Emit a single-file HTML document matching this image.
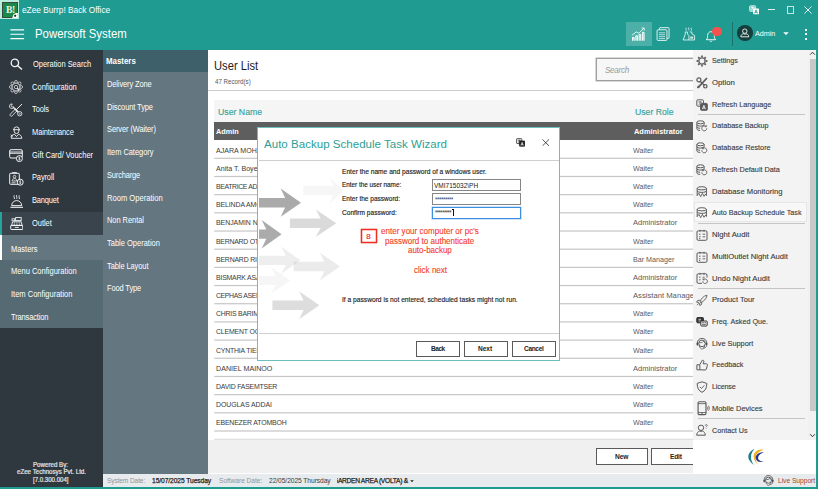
<!DOCTYPE html>
<html><head><meta charset="utf-8"><title>eZee Burrp! Back Office</title>
<style>
*{box-sizing:border-box;margin:0;padding:0}
html,body{width:818px;height:489px;overflow:hidden;background:#1f9b92;font-family:"Liberation Sans",sans-serif}
#app{position:relative;width:818px;height:489px;background:#1f9b92;overflow:hidden}
.a{position:absolute}
.t{position:absolute;white-space:pre;line-height:1;transform-origin:0 0}
.ico{position:absolute;left:696px;width:12px;height:12px}
</style></head>
<body>
<div id="app">
<div class="a" style="left:0;top:0;width:18.900px;height:18.900px;background:#b7eedb"></div>
<div class="a" style="left:1.500px;top:1.700px;width:16.400px;height:16.200px;background:#1b8a49;border:1.200px solid #3a4a40"></div>
<div class="t" style="left:5.70px;top:3.60px;font-size:10.8px;color:#e9f5ee;letter-spacing:-0.621px;transform:scaleX(0.9000);font-weight:bold;font-family:'Liberation Serif',serif;">B!</div>
<svg class="a" style="left:11.500px;top:13px" width="6.400" height="5.200" viewBox="0 0 13 10.500"><path d="M0 10.500L3 3 8 0h5v10.500z" fill="#fff"/><path d="M6.500 3.200l2.400 1.700-.9 2.800H5l-.9-2.800z" fill="#222"/><path d="M1 8l1.500 1M11 2.500l1.500 1M11.500 8.500l1-1" stroke="#222" stroke-width="1.200"/></svg>
<div class="t" style="left:21.50px;top:6.40px;font-size:8.9px;color:#fff;transform:scaleX(0.9329);">eZee Burrp! Back Office</div>
<svg class="a" style="left:9.5px;top:28px" width="15" height="13" viewBox="0 0 15 13"><path d="M0.400 1.800h13.700M0.400 6.200h13.700M0.400 10.600h13.700" stroke="#fff" stroke-width="1.15"/></svg>
<div class="t" style="left:35.40px;top:29.30px;font-size:11.9px;color:#fff;transform:scaleX(0.9569);">Powersoft System</div>
<svg class="a" style="left:748.500px;top:4.800px" width="10.500" height="9.800" viewBox="0 0 11 10"><rect x="0.600" y="0.600" width="6.400" height="6" rx=".9" fill="#8fd0ca" stroke="#d9efed" stroke-width=".8"/><path d="M2 2.600h3.400M3.700 1.600v1M2.300 5c1-.4 2-1.300 2.300-2.400" stroke="#fff" stroke-width=".75" fill="none"/><rect x="4.300" y="3.500" width="6.300" height="6.100" rx=".8" fill="#fff"/><path d="M5.900 8.700l1.500-3.700 1.500 3.700M6.400 7.600h2" stroke="#1f9b92" stroke-width=".85" fill="none"/></svg>
<div class="a" style="left:768px;top:8.8px;width:7.2px;height:1px;background:#e4f3f2;"></div>
<div class="a" style="left:786.500px;top:6.200px;width:7.400px;height:7.400px;border:1px solid #c4e6e3"></div>
<svg class="a" style="left:804.300px;top:6px" width="8" height="8" viewBox="0 0 8 8"><path d="M0.400 0.400l7.200 7.200M7.600 0.400l-7.200 7.200" stroke="#eef8f7" stroke-width=".95"/></svg>
<div class="a" style="left:626px;top:21.8px;width:25.6px;height:24.7px;background:#4cb0a8;"></div>
<svg class="a" style="left:631px;top:27px" width="15" height="15" viewBox="0 0 15 15" fill="none" stroke="#fff" stroke-width="1" stroke-opacity=".92"><path d="M1.500 13.700v-3.300h1.700v3.300M4.800 13.700v-5h1.700v5M8.100 13.700v-6.300h1.700v6.300M11.400 13.700v-8.300h1.700v8.300" fill="#fff" fill-opacity=".45"/><path d="M0.800 8.300l4.700-3.400 2.300 1.400 5.300-5.300M10.600 1h2.600v2.600" stroke-width=".9"/></svg>
<svg class="a" style="left:656.300px;top:27px" width="14.500" height="14.500" viewBox="0 0 15 15" fill="none" stroke="#fff" stroke-width="1" stroke-opacity=".88"><path d="M3.600 2.800V1.300c0-.4.300-.6.600-.6h8.600c.4 0 .7.200.7.600v9.800c0 .4-.3.600-.7.600h-1.400"/><rect x="1.100" y="2.900" width="10.200" height="11" rx="1"/><path d="M3 6h6.400M3 8h6.400M3 10h6.400M3 12h6.400" stroke-width=".8"/></svg>
<svg class="a" style="left:682px;top:27.300px" width="14" height="14" viewBox="0 0 15 15" fill="none" stroke="#fff" stroke-width=".95" stroke-opacity=".88"><path d="M4.400 0.800c-.9 1.100.9 1.800 0 3M7.200 0.600c-.9 1.100.9 1.800 0 3M10 0.800c-.9 1.100.9 1.800 0 3"/><path d="M3.600 5.300h2.200l.3 2.500 1.300 1.400v4.700H1.200l2.200-5.900z"/><path d="M8.300 5.300h2.200l.2 2.200 2.800 1.500v4.900H7.400"/><rect x="8.800" y="10.200" width="3.200" height="2.400" fill="#fff" fill-opacity=".75" stroke="none"/></svg>
<svg class="a" style="left:705.300px;top:29.500px" width="13" height="12.500" viewBox="0 0 14 13" fill="none" stroke="#fff" stroke-width="1" stroke-opacity=".92"><path d="M1.200 10.200c1.600-1 1.600-2.600 1.600-4.600 0-2.200 1.400-4 3.600-4s3.600 1.800 3.600 4c0 2 0 3.600 1.600 4.600z"/><path d="M5 11.300c.3 1 2.500 1 2.800 0"/></svg>
<div class="a" style="left:712px;top:26.600px;width:9.800px;height:9.800px;border-radius:50%;background:#f5524f"></div>
<div class="a" style="left:732px;top:21.8px;width:1px;height:24.5px;background:#18736c;"></div>
<div class="a" style="left:737.100px;top:25.400px;width:15.600px;height:15.600px;border-radius:50%;background:#153f3b"></div>
<svg class="a" style="left:740.100px;top:28.200px" width="9.600" height="9.600" viewBox="0 0 10 10" fill="none" stroke="#fff" stroke-width=".9"><circle cx="5" cy="3.300" r="2.300"/><path d="M0.800 9.200c.2-2.200 1.600-3 2.800-3.200.8.600 2 .6 2.800 0 1.200.2 2.600 1 2.800 3.200z"/></svg>
<div class="t" style="left:755.00px;top:29.60px;font-size:7.3px;color:#fff;transform:scaleX(0.9813);">Admin</div>
<svg class="a" style="left:782.900px;top:31.600px" width="6" height="3.300" viewBox="0 0 7 4"><path d="M0.200 0.200h6.600L3.500 3.800z" fill="#fff"/></svg>
<div class="a" style="left:805px;top:28.8px;width:2.1px;height:2.1px;background:#fff;"></div>
<div class="a" style="left:805px;top:33.1px;width:2.1px;height:2.1px;background:#fff;"></div>
<div class="a" style="left:805px;top:37.6px;width:2.1px;height:2.1px;background:#fff;"></div>
<div class="a" style="left:0px;top:49.6px;width:103px;height:438.4px;background:#2f373f;"></div>
<div class="a" style="left:0px;top:211.7px;width:103px;height:23px;background:#3a444c;"></div>
<div class="a" style="left:0px;top:211.7px;width:2.2px;height:23px;background:#26a69a;"></div>
<div class="a" style="left:0px;top:234.7px;width:103px;height:25.3px;background:#64767f;"></div>
<div class="a" style="left:0px;top:234.7px;width:2.2px;height:25.3px;background:#fff;"></div>
<div class="a" style="left:0px;top:260px;width:103px;height:68px;background:#566a74;"></div>
<svg class="a" style="left:9.5px;top:58px" width="13" height="13" viewBox="0 0 13 13" fill="none" stroke="#fff" stroke-width="1" stroke-opacity=".95" ><circle cx="4.900" cy="4.900" r="3.700" stroke-width="1.300"/><path d="M7.700 7.700l4.300 3.800" stroke-width="1.500"/></svg>
<svg class="a" style="left:9px;top:80.2px" width="14" height="14" viewBox="0 0 14 14" fill="none" stroke="#fff" stroke-width="1" stroke-opacity=".95" ><g stroke-width=".75" stroke-opacity=".85"><circle cx="12.10" cy="7.00" r="1.45"/><circle cx="10.61" cy="10.61" r="1.45"/><circle cx="7.00" cy="12.10" r="1.45"/><circle cx="3.39" cy="10.61" r="1.45"/><circle cx="1.90" cy="7.00" r="1.45"/><circle cx="3.39" cy="3.39" r="1.45"/><circle cx="7.00" cy="1.90" r="1.45"/><circle cx="10.61" cy="3.39" r="1.45"/><circle cx="7" cy="7" r="3.900" fill="#2f373f"/><circle cx="7" cy="7" r="1.700"/><path d="M8.200 8.200l2.300 2.300" stroke-width="1.300"/></g></svg>
<svg class="a" style="left:9px;top:102.8px" width="14" height="14" viewBox="0 0 14 14" fill="none" stroke="#fff" stroke-width="1" stroke-opacity=".95" ><g stroke-opacity=".9"><path d="M13 1L7.300 6.700" stroke-width="1"/><path d="M6.400 6l1.700 1.700-5 5.100c-.5.500-1.200.5-1.700 0s-.5-1.200 0-1.700z" stroke-width=".85"/><path d="M4.900 3.900a2.300 2.300 0 1 1-1.600-2.900l-1.100 1.500.4 1.200 1.300.2z" stroke-width=".85"/><path d="M4.800 4.700l4.400 4.400" stroke-width="1.600"/><circle cx="10.700" cy="10.700" r="2.200" stroke-width=".85"/><circle cx="10.700" cy="10.700" r=".7" stroke-width=".6"/></g></svg>
<svg class="a" style="left:9.5px;top:126px" width="13" height="13" viewBox="0 0 13 13" fill="none" stroke="#fff" stroke-width="1" stroke-opacity=".95" ><path d="M3.800 3.600a2.700 2.700 0 0 1 5.400 0M3 3.700h7M4.200 3.900v1.300a2.300 2.300 0 0 0 4.600 0v-1.300" stroke-width=".9"/><path d="M1.200 12.300c.1-2.400 1.500-3.600 3.300-4l2 2.300 2-2.300c1.800.4 3.200 1.600 3.300 4z" stroke-width=".9"/><path d="M0.700 8.600l2 2M0.800 10.600l1.800-2" stroke-width=".8"/></svg>
<svg class="a" style="left:8.5px;top:148.8px" width="15" height="13.5" viewBox="0 0 15 13.500" fill="none" stroke="#fff" stroke-width="1" stroke-opacity=".95" ><rect x="0.700" y="0.700" width="12.600" height="8.300" rx="1.300"/><path d="M0.700 3h12.600M0.700 4.300h12.600" stroke-width=".9"/><circle cx="10.400" cy="9.600" r="3" fill="#2f373f"/><path d="M11.200 8.600c-.6-.6-1.700-.3-1.600.4.100.8 1.700.4 1.700 1.300 0 .7-1.200.9-1.800.2M10.400 7.700v3.800" stroke-width=".6"/></svg>
<svg class="a" style="left:8.5px;top:171.5px" width="15" height="14" viewBox="0 0 15 14" fill="none" stroke="#fff" stroke-width="1" stroke-opacity=".95" ><rect x="0.700" y="1.300" width="9.600" height="11" rx=".8"/><path d="M3.600 1.300v-.8h3.800v.8" stroke-width=".8"/><circle cx="5.500" cy="4.600" r="1.300" stroke-width=".8"/><path d="M3.200 9c0-1.600 1-2.400 2.300-2.400s2.300.8 2.300 2.400z" stroke-width=".8"/><path d="M2.500 10.800h4" stroke-width=".8"/><circle cx="11.200" cy="10.200" r="3" fill="#2f373f"/><path d="M12 9.200c-.6-.6-1.700-.3-1.600.4.100.8 1.700.4 1.700 1.300 0 .7-1.200.9-1.800.2M11.200 8.300v3.800" stroke-width=".6"/></svg>
<svg class="a" style="left:9.5px;top:194.5px" width="13.5" height="13" viewBox="0 0 13.500 13" fill="none" stroke="#fff" stroke-width="1" stroke-opacity=".95" ><path d="M4.200 0.300c-1 1.300 1 2.200 0 3.800M6.700 0.100c-1 1.300 1 2.200 0 3.800M9.200 0.300c-1 1.300 1 2.200 0 3.800" stroke-width=".85"/><path d="M1.700 10.600a5 5 0 0 1 10 0z" stroke-width=".95"/><path d="M0.400 12.300h12.600" stroke-width="1.100"/></svg>
<svg class="a" style="left:9.5px;top:217.3px" width="13.5" height="13.2" viewBox="0 0 13.500 13.200" fill="none" stroke="#fff" stroke-width="1" stroke-opacity=".95" ><rect x="5.600" y="0.600" width="5.600" height="3" stroke-width=".9"/><rect x="2" y="1.800" width="2.600" height="2" stroke-width=".8"/><path d="M2.600 4.800h8.600l1 3.600H1.600z" stroke-width=".9"/><path d="M4 6h1M6.400 6h1M8.800 6h1M3.800 7.300h1M6.400 7.300h1M9 7.300h1" stroke-width=".7"/><rect x="0.700" y="8.400" width="12.100" height="4.100" rx=".6"/><path d="M4.800 10.400h4" stroke-width=".9"/></svg>
<div class="t" style="left:33.00px;top:60.00px;font-size:8.3px;color:#fff;letter-spacing:-0.023px;transform:scaleX(0.9000);">Operation Search</div>
<div class="t" style="left:32.20px;top:82.68px;font-size:8.3px;color:#fff;transform:scaleX(0.9076);">Configuration</div>
<div class="t" style="left:32.20px;top:105.36px;font-size:8.3px;color:#fff;letter-spacing:-0.097px;transform:scaleX(0.9000);">Tools</div>
<div class="t" style="left:32.20px;top:128.04px;font-size:8.3px;color:#fff;letter-spacing:-0.097px;transform:scaleX(0.9000);">Maintenance</div>
<div class="t" style="left:32.20px;top:150.72px;font-size:8.3px;color:#fff;letter-spacing:-0.027px;transform:scaleX(0.9000);">Gift Card/ Voucher</div>
<div class="t" style="left:32.20px;top:173.40px;font-size:8.3px;color:#fff;letter-spacing:-0.133px;transform:scaleX(0.9000);">Payroll</div>
<div class="t" style="left:32.20px;top:196.08px;font-size:8.3px;color:#fff;letter-spacing:-0.163px;transform:scaleX(0.9000);">Banquet</div>
<div class="t" style="left:32.20px;top:218.76px;font-size:8.3px;color:#fff;letter-spacing:-0.023px;transform:scaleX(0.9000);">Outlet</div>
<div class="t" style="left:10.50px;top:244.50px;font-size:8.3px;color:#fff;letter-spacing:-0.010px;transform:scaleX(0.9000);">Masters</div>
<div class="t" style="left:10.50px;top:267.30px;font-size:8.3px;color:#fff;transform:scaleX(0.9072);">Menu Configuration</div>
<div class="t" style="left:10.50px;top:290.00px;font-size:8.3px;color:#fff;transform:scaleX(0.9071);">Item Configuration</div>
<div class="t" style="left:10.50px;top:312.70px;font-size:8.3px;color:#fff;letter-spacing:-0.136px;transform:scaleX(0.9000);">Transaction</div>
<div class="t" style="left:33.30px;top:461.60px;font-size:6.3px;color:#e4e6e8;transform:scaleX(0.9803);-webkit-text-stroke:.2px #e4e6e8;">Powered By:</div>
<div class="t" style="left:16.70px;top:469.20px;font-size:6.3px;color:#e4e6e8;transform:scaleX(0.9774);-webkit-text-stroke:.2px #e4e6e8;">eZee Technosys Pvt. Ltd.</div>
<div class="t" style="left:33.30px;top:476.60px;font-size:6.3px;color:#e4e6e8;transform:scaleX(0.9656);-webkit-text-stroke:.2px #e4e6e8;">[7.0.300.004]</div>
<div class="a" style="left:103px;top:49.6px;width:105.3px;height:424px;background:#64767f;"></div>
<div class="a" style="left:103px;top:49.6px;width:105.3px;height:22.6px;background:#3d606b;"></div>
<div class="t" style="left:105.50px;top:57.30px;font-size:8.8px;color:#fff;letter-spacing:-0.022px;transform:scaleX(0.9000);font-weight:bold;">Masters</div>
<div class="t" style="left:107.00px;top:80.00px;font-size:8.3px;color:#fff;letter-spacing:-0.126px;transform:scaleX(0.9000);">Delivery Zone</div>
<div class="t" style="left:107.00px;top:102.72px;font-size:8.3px;color:#fff;letter-spacing:-0.111px;transform:scaleX(0.9000);">Discount Type</div>
<div class="t" style="left:107.00px;top:125.44px;font-size:8.3px;color:#fff;letter-spacing:-0.107px;transform:scaleX(0.9000);">Server (Waiter)</div>
<div class="t" style="left:107.00px;top:148.16px;font-size:8.3px;color:#fff;letter-spacing:-0.043px;transform:scaleX(0.9000);">Item Category</div>
<div class="t" style="left:107.00px;top:170.88px;font-size:8.3px;color:#fff;letter-spacing:-0.179px;transform:scaleX(0.9000);">Surcharge</div>
<div class="t" style="left:107.00px;top:193.60px;font-size:8.3px;color:#fff;transform:scaleX(0.9150);">Room Operation</div>
<div class="t" style="left:107.00px;top:216.32px;font-size:8.3px;color:#fff;letter-spacing:-0.052px;transform:scaleX(0.9000);">Non Rental</div>
<div class="t" style="left:107.00px;top:239.04px;font-size:8.3px;color:#fff;transform:scaleX(0.9031);">Table Operation</div>
<div class="t" style="left:107.00px;top:261.76px;font-size:8.3px;color:#fff;letter-spacing:-0.089px;transform:scaleX(0.9000);">Table Layout</div>
<div class="t" style="left:107.00px;top:284.48px;font-size:8.3px;color:#fff;letter-spacing:-0.130px;transform:scaleX(0.9000);">Food Type</div>
<div class="a" style="left:208.3px;top:49.6px;width:609.7px;height:424px;background:#fff;"></div>
<div class="t" style="left:214.30px;top:60.20px;font-size:12.4px;color:#1c1c1c;transform:scaleX(0.9020);">User List</div>
<div class="t" style="left:214.50px;top:78.50px;font-size:6.5px;color:#555;transform:scaleX(0.9500);">47 Record(s)</div>
<div class="a" style="left:208.3px;top:90px;width:609.7px;height:1px;background:#cbcbcb;"></div>
<div class="a" style="left:596px;top:58px;width:120px;height:23.400px;border:1px solid #9e9e9e;background:#f7f7f7;box-shadow:0 0 0 .45px #ababab"></div>
<div class="t" style="left:605.00px;top:65.80px;font-size:9px;color:#9a9a9a;letter-spacing:-0.329px;transform:scaleX(0.9000);font-style:italic;">Search</div>
<div class="a" style="left:214.3px;top:99.6px;width:603.7px;height:22.8px;background:#f5f5f5;"></div>
<div class="t" style="left:217.80px;top:106.90px;font-size:9.6px;color:#38a39a;transform:scaleX(0.9090);-webkit-text-stroke:.15px #38a39a;">User Name</div>
<div class="t" style="left:635.20px;top:106.90px;font-size:9.6px;color:#38a39a;transform:scaleX(0.9049);-webkit-text-stroke:.15px #38a39a;">User Role</div>
<div class="a" style="left:214.3px;top:122.4px;width:603.7px;height:17.7px;background:#5e5e5e;"></div>
<div class="t" style="left:216.20px;top:128.10px;font-size:7.8px;color:#fff;transform:scaleX(0.9355);font-weight:bold;">Admin</div>
<div class="t" style="left:633.50px;top:128.10px;font-size:7.8px;color:#fff;transform:scaleX(0.9526);font-weight:bold;">Administrator</div>
<div class="t" style="left:216.20px;top:146.60px;font-size:7.7px;color:#3a3a3a;transform:scaleX(0.9181);">AJARA MOHAMMED</div>
<div class="t" style="left:633.30px;top:146.60px;font-size:7.9px;color:#5a5a5a;transform:scaleX(0.9016);">Waiter</div>
<div class="t" style="left:216.20px;top:164.78px;font-size:7.7px;color:#3a3a3a;transform:scaleX(0.9212);">Anita T. Boye</div>
<div class="t" style="left:633.30px;top:164.78px;font-size:7.9px;color:#5a5a5a;transform:scaleX(0.9016);">Waiter</div>
<div class="t" style="left:216.20px;top:182.96px;font-size:7.7px;color:#3a3a3a;letter-spacing:-0.427px;transform:scaleX(0.9000);">BEATRICE ADDO</div>
<div class="t" style="left:633.30px;top:182.96px;font-size:7.9px;color:#5a5a5a;transform:scaleX(0.9016);">Waiter</div>
<div class="t" style="left:216.20px;top:201.14px;font-size:7.7px;color:#3a3a3a;letter-spacing:-0.109px;transform:scaleX(0.9000);">BELINDA AMOAH</div>
<div class="t" style="left:633.30px;top:201.14px;font-size:7.9px;color:#5a5a5a;transform:scaleX(0.9016);">Waiter</div>
<div class="t" style="left:216.20px;top:219.32px;font-size:7.7px;color:#3a3a3a;letter-spacing:-0.026px;transform:scaleX(0.9000);">BENJAMIN NARTEY</div>
<div class="t" style="left:633.30px;top:219.32px;font-size:7.9px;color:#5a5a5a;transform:scaleX(0.9530);">Administrator</div>
<div class="t" style="left:216.20px;top:237.50px;font-size:7.7px;color:#3a3a3a;letter-spacing:-0.290px;transform:scaleX(0.9000);">BERNARD OTOO</div>
<div class="t" style="left:633.30px;top:237.50px;font-size:7.9px;color:#5a5a5a;transform:scaleX(0.9016);">Waiter</div>
<div class="t" style="left:216.20px;top:255.68px;font-size:7.7px;color:#3a3a3a;letter-spacing:-0.220px;transform:scaleX(0.9000);">BERNARD RICHARD</div>
<div class="t" style="left:633.30px;top:255.68px;font-size:7.9px;color:#5a5a5a;transform:scaleX(0.9052);">Bar Manager</div>
<div class="t" style="left:216.20px;top:273.86px;font-size:7.7px;color:#3a3a3a;letter-spacing:-0.224px;transform:scaleX(0.9000);">BISMARK ASANTE</div>
<div class="t" style="left:633.30px;top:273.86px;font-size:7.9px;color:#5a5a5a;transform:scaleX(0.9530);">Administrator</div>
<div class="t" style="left:216.20px;top:292.04px;font-size:7.7px;color:#3a3a3a;letter-spacing:-0.439px;transform:scaleX(0.9000);">CEPHAS ASEMPA</div>
<div class="t" style="left:633.30px;top:292.04px;font-size:7.9px;color:#5a5a5a;transform:scaleX(0.9716);">Assistant Manager</div>
<div class="t" style="left:216.20px;top:310.22px;font-size:7.7px;color:#3a3a3a;letter-spacing:-0.256px;transform:scaleX(0.9000);">CHRIS BARIMAH</div>
<div class="t" style="left:633.30px;top:310.22px;font-size:7.9px;color:#5a5a5a;transform:scaleX(0.9016);">Waiter</div>
<div class="t" style="left:216.20px;top:328.40px;font-size:7.7px;color:#3a3a3a;letter-spacing:-0.179px;transform:scaleX(0.9000);">CLEMENT OCRAN</div>
<div class="t" style="left:633.30px;top:328.40px;font-size:7.9px;color:#5a5a5a;transform:scaleX(0.9016);">Waiter</div>
<div class="t" style="left:216.20px;top:346.58px;font-size:7.7px;color:#3a3a3a;letter-spacing:-0.217px;transform:scaleX(0.9000);">CYNTHIA TIEKU</div>
<div class="t" style="left:633.30px;top:346.58px;font-size:7.9px;color:#5a5a5a;transform:scaleX(0.9016);">Waiter</div>
<div class="t" style="left:216.20px;top:364.76px;font-size:7.7px;color:#3a3a3a;transform:scaleX(0.9274);">DANIEL MAINOO</div>
<div class="t" style="left:633.30px;top:364.76px;font-size:7.9px;color:#5a5a5a;transform:scaleX(0.9530);">Administrator</div>
<div class="t" style="left:216.20px;top:382.94px;font-size:7.7px;color:#3a3a3a;letter-spacing:-0.249px;transform:scaleX(0.9000);">DAVID FASEMTSER</div>
<div class="t" style="left:633.30px;top:382.94px;font-size:7.9px;color:#5a5a5a;transform:scaleX(0.9016);">Waiter</div>
<div class="t" style="left:216.20px;top:401.12px;font-size:7.7px;color:#3a3a3a;letter-spacing:-0.054px;transform:scaleX(0.9000);">DOUGLAS ADDAI</div>
<div class="t" style="left:633.30px;top:401.12px;font-size:7.9px;color:#5a5a5a;transform:scaleX(0.9016);">Waiter</div>
<div class="t" style="left:216.20px;top:419.30px;font-size:7.7px;color:#3a3a3a;letter-spacing:-0.186px;transform:scaleX(0.9000);">EBENEZER ATOMBOH</div>
<div class="t" style="left:633.30px;top:419.30px;font-size:7.9px;color:#5a5a5a;transform:scaleX(0.9016);">Waiter</div>
<svg class="a" style="left:214px;top:150px" width="604" height="292" viewBox="214 150 604 292"><rect x="214.300" y="157.70" width="604" height="1.200" fill="#c6c6c6"/><rect x="214.300" y="175.88" width="604" height="1.200" fill="#c6c6c6"/><rect x="214.300" y="194.06" width="604" height="1.200" fill="#c6c6c6"/><rect x="214.300" y="212.24" width="604" height="1.200" fill="#c6c6c6"/><rect x="214.300" y="230.42" width="604" height="1.200" fill="#c6c6c6"/><rect x="214.300" y="248.60" width="604" height="1.200" fill="#c6c6c6"/><rect x="214.300" y="266.78" width="604" height="1.200" fill="#c6c6c6"/><rect x="214.300" y="284.96" width="604" height="1.200" fill="#c6c6c6"/><rect x="214.300" y="303.14" width="604" height="1.200" fill="#c6c6c6"/><rect x="214.300" y="321.32" width="604" height="1.200" fill="#c6c6c6"/><rect x="214.300" y="339.50" width="604" height="1.200" fill="#c6c6c6"/><rect x="214.300" y="357.68" width="604" height="1.200" fill="#c6c6c6"/><rect x="214.300" y="375.86" width="604" height="1.200" fill="#c6c6c6"/><rect x="214.300" y="394.04" width="604" height="1.200" fill="#c6c6c6"/><rect x="214.300" y="412.22" width="604" height="1.200" fill="#c6c6c6"/><rect x="214.300" y="430.40" width="604" height="1.200" fill="#c6c6c6"/><rect x="214.300" y="438.800" width="604" height="0.900" fill="#d2d2d2"/></svg>
<div class="a" style="left:208.3px;top:439.7px;width:609.7px;height:33.8px;background:#f0f0f0;"></div>
<div class="a" style="left:596.3px;top:447.6px;width:51.6px;height:17.1px;background:#fff;border:1px solid #5a5a5a"></div>
<div class="t" style="left:614.70px;top:452.60px;font-size:7.4px;color:#222;letter-spacing:-0.142px;transform:scaleX(0.9000);font-weight:bold;">New</div>
<div class="a" style="left:650.7px;top:447.6px;width:51.6px;height:17.1px;background:#fff;border:1px solid #5a5a5a"></div>
<div class="t" style="left:670.30px;top:452.60px;font-size:7.4px;color:#222;letter-spacing:-0.242px;transform:scaleX(0.9000);font-weight:bold;">Edit</div>
<div class="a" style="left:692.6px;top:49.6px;width:1px;height:390.1px;background:#e3e3e3;"></div>
<div class="a" style="left:693.4px;top:49.6px;width:124.6px;height:390.1px;background:#f3f3f3;"></div>
<div class="a" style="left:694px;top:201.500px;width:112.500px;height:20.500px;background:#f8f8f8;border:1px solid #e6e6e6"></div>
<svg class="a" style="left:696.200px;top:55.2px" width="12" height="12" viewBox="0 0 12 12" fill="none" stroke="#5a5a5a" stroke-width="1"><circle cx="6" cy="6" r="3.100" stroke-width="1.250" stroke="#666"/><path d="M6 .6v1.900M6 9.500v1.900M.6 6h1.900M9.500 6h1.900M2.200 2.200l1.300 1.300M8.500 8.500l1.300 1.300M2.200 9.800l1.300-1.300M8.500 3.500l1.300-1.300" stroke-width="1.800" stroke="#666"/></svg>
<div class="t" style="left:712.30px;top:57.30px;font-size:8px;color:#3a3a3a;letter-spacing:-0.030px;transform:scaleX(0.9000);-webkit-text-stroke:.12px #3a3a3a;">Settings</div>
<svg class="a" style="left:696.200px;top:76.9px" width="12" height="12" viewBox="0 0 12 12" fill="none" stroke="#5a5a5a" stroke-width="1"><path d="M11 1l-8.800 9.300" stroke-width="1.700"/><path d="M4.300 4.300l4.200 4.200" stroke-width="1.200"/><circle cx="2.900" cy="2.900" r="2" stroke-width="1.200"/><circle cx="9.300" cy="9.300" r="1.700" stroke-width="1.200"/><path d="M1.600 9.400l1.400 1.400" stroke-width="2.200"/></svg>
<div class="t" style="left:712.30px;top:79.02px;font-size:8px;color:#3a3a3a;transform:scaleX(0.9670);-webkit-text-stroke:.12px #3a3a3a;">Option</div>
<svg class="a" style="left:696.200px;top:98.6px" width="12" height="12" viewBox="0 0 12 12" fill="none" stroke="#5a5a5a" stroke-width="1"><rect x="0.800" y="0.800" width="6.600" height="6.400" rx=".9"/><path d="M2.300 3h3.400M4 2.100v.9M2.600 5.600c1.100-.5 2-1.300 2.300-2.500" stroke-width=".8"/><rect x="4.600" y="4.400" width="6.700" height="6.900" rx=".9" fill="#5a5a5a"/><path d="M6.400 10.200l1.500-3.900 1.500 3.900M6.900 9h2" stroke="#f3f3f3" stroke-width=".9"/></svg>
<div class="t" style="left:712.30px;top:100.74px;font-size:8px;color:#3a3a3a;transform:scaleX(0.9008);-webkit-text-stroke:.12px #3a3a3a;">Refresh Language</div>
<svg class="a" style="left:696.200px;top:120.4px" width="12" height="12" viewBox="0 0 12 12" fill="none" stroke="#5a5a5a" stroke-width="1"><ellipse cx="4.500" cy="2.300" rx="3.600" ry="1.500"/><path d="M0.900 2.300v6.600c0 .8 1.400 1.500 3.300 1.500M8.100 2.300v2.400M0.900 4.600c0 .8 1.600 1.500 3.600 1.500s3.600-.7 3.600-1.500M0.900 6.800c0 .8 1.400 1.400 3.200 1.500"/><path d="M10.800 8.300a2.500 2.500 0 1 1-.8-1.800M10.300 5.200v1.500h-1.500" stroke-width=".9"/></svg>
<div class="t" style="left:712.30px;top:122.46px;font-size:8px;color:#3a3a3a;letter-spacing:-0.018px;transform:scaleX(0.9000);-webkit-text-stroke:.12px #3a3a3a;">Database Backup</div>
<svg class="a" style="left:696.200px;top:142.1px" width="12" height="12" viewBox="0 0 12 12" fill="none" stroke="#5a5a5a" stroke-width="1"><ellipse cx="4.500" cy="2.300" rx="3.600" ry="1.500"/><path d="M0.900 2.300v6.600c0 .8 1.400 1.500 3.300 1.500M8.100 2.300v2.400M0.900 4.600c0 .8 1.600 1.500 3.600 1.500s3.600-.7 3.600-1.500M0.900 6.800c0 .8 1.400 1.400 3.200 1.500"/><path d="M5.800 8.300a2.500 2.500 0 1 0 .8-1.800M6.300 5.200v1.500h1.500" stroke-width=".9"/></svg>
<div class="t" style="left:712.30px;top:144.18px;font-size:8px;color:#3a3a3a;transform:scaleX(0.9087);-webkit-text-stroke:.12px #3a3a3a;">Database Restore</div>
<svg class="a" style="left:696.200px;top:163.8px" width="12" height="12" viewBox="0 0 12 12" fill="none" stroke="#5a5a5a" stroke-width="1"><ellipse cx="4.500" cy="2.300" rx="3.600" ry="1.500"/><path d="M0.900 2.300v6.600c0 .8 1.400 1.500 3.300 1.500M8.100 2.300v2.400M0.900 4.600c0 .8 1.600 1.500 3.600 1.500s3.600-.7 3.600-1.500M0.900 6.800c0 .8 1.400 1.400 3.200 1.500"/><path d="M5.800 8.300a2.500 2.500 0 1 0 .8-1.800M6.300 5.200v1.500h1.500" stroke-width=".9"/></svg>
<div class="t" style="left:712.30px;top:165.90px;font-size:8px;color:#3a3a3a;transform:scaleX(0.9089);-webkit-text-stroke:.12px #3a3a3a;">Refresh Default Data</div>
<svg class="a" style="left:696.200px;top:185.5px" width="12" height="12" viewBox="0 0 12 12" fill="none" stroke="#5a5a5a" stroke-width="1"><ellipse cx="5.800" cy="2.300" rx="4.600" ry="1.600"/><path d="M1.200 2.300v7.500M10.400 2.300v7.500M1.200 4.800c0 .9 2 1.600 4.600 1.600s4.600-.7 4.600-1.600"/><path d="M1.200 9.500l1.700-2.200 1.800 3.400 1.700-3.400 1.600 3 1-1.800h1.600" stroke-width=".9"/></svg>
<div class="t" style="left:712.30px;top:187.62px;font-size:8px;color:#3a3a3a;transform:scaleX(0.9536);-webkit-text-stroke:.12px #3a3a3a;">Database Monitoring</div>
<svg class="a" style="left:696.200px;top:207.2px" width="12" height="12" viewBox="0 0 12 12" fill="none" stroke="#5a5a5a" stroke-width="1"><ellipse cx="5.800" cy="2.300" rx="4.600" ry="1.600"/><path d="M1.200 2.300v7.500M10.400 2.300v7.500M1.200 4.800c0 .9 2 1.600 4.600 1.600s4.600-.7 4.600-1.600"/><path d="M1.200 9.500l1.700-2.200 1.800 3.400 1.700-3.400 1.600 3 1-1.800h1.600" stroke-width=".9"/></svg>
<div class="t" style="left:712.30px;top:209.34px;font-size:8px;color:#3a3a3a;letter-spacing:-0.002px;transform:scaleX(0.9000);-webkit-text-stroke:.12px #3a3a3a;">Auto Backup Schedule Task</div>
<svg class="a" style="left:696.200px;top:229.0px" width="12" height="12" viewBox="0 0 12 12" fill="none" stroke="#5a5a5a" stroke-width="1"><rect x="1" y="1.800" width="10" height="9.500" rx="1.200"/><path d="M4 .8v2M8 .8v2M3 5.200h1.600M6.600 5.200h2.600M3 7.800h1.600M6.600 7.800h2.600M3 9.600h1.200" stroke-width=".9"/></svg>
<div class="t" style="left:712.30px;top:231.06px;font-size:8px;color:#3a3a3a;transform:scaleX(0.9637);-webkit-text-stroke:.12px #3a3a3a;">Night Audit</div>
<svg class="a" style="left:696.200px;top:250.7px" width="12" height="12" viewBox="0 0 12 12" fill="none" stroke="#5a5a5a" stroke-width="1"><rect x="1" y="1.800" width="10" height="9.500" rx="1.200"/><path d="M4 .8v2M8 .8v2M3 5.200h1.600M6.600 5.200h2.600M3 7.800h1.600M6.600 7.800h2.600M3 9.600h1.200" stroke-width=".9"/></svg>
<div class="t" style="left:712.30px;top:252.78px;font-size:8px;color:#3a3a3a;transform:scaleX(0.9589);-webkit-text-stroke:.12px #3a3a3a;">MultiOutlet Night Audit</div>
<svg class="a" style="left:696.200px;top:272.4px" width="12" height="12" viewBox="0 0 12 12" fill="none" stroke="#5a5a5a" stroke-width="1"><path d="M6 11.300H2.200a1.200 1.200 0 0 1-1.200-1.200V3a1.200 1.200 0 0 1 1.200-1.200h7.600A1.200 1.200 0 0 1 11 3v2.500"/><path d="M4 .8v2M8 .8v2M3 5.200h1.600M6.600 5.200h2M3 7.800h1.600" stroke-width=".9"/><path d="M6.800 9.300a2.300 2.300 0 1 0 .7-1.700M7 6.300v1.500h1.500" stroke-width=".9"/></svg>
<div class="t" style="left:712.30px;top:274.50px;font-size:8px;color:#3a3a3a;transform:scaleX(0.9626);-webkit-text-stroke:.12px #3a3a3a;">Undo Night Audit</div>
<svg class="a" style="left:696.200px;top:294.1px" width="12" height="12" viewBox="0 0 12 12" fill="none" stroke="#5a5a5a" stroke-width="1"><path d="M4 8.200C4.800 5 7.500 1.800 11 1.200c-.3 3.600-3.400 6.300-6.400 7.400zM4.200 6.200l-2.600.3-1 1.700 2.300.3M5.800 7.900l-.3 2.600-1.700 1-.3-2.400M2.800 9.300l-1.800 1.800" stroke-width=".9"/></svg>
<div class="t" style="left:712.30px;top:296.22px;font-size:8px;color:#3a3a3a;transform:scaleX(0.9421);-webkit-text-stroke:.12px #3a3a3a;">Product Tour</div>
<svg class="a" style="left:696.200px;top:315.8px" width="12" height="12" viewBox="0 0 12 12" fill="none" stroke="#5a5a5a" stroke-width="1"><rect x="0.800" y="1.500" width="6.600" height="5.300" rx=".8" fill="#333" stroke="#333"/><rect x="4.800" y="5" width="6.400" height="5" rx=".8" fill="#f3f3f3" stroke="#333"/><path d="M6.200 6.600h1.500M8.600 6.600h1.300M6.200 8.300h3.600" stroke="#333" stroke-width=".8"/><path d="M2.500 3.300h2.500M2.500 5h2" stroke="#f3f3f3" stroke-width=".8"/></svg>
<div class="t" style="left:712.30px;top:317.94px;font-size:8px;color:#3a3a3a;transform:scaleX(0.9010);-webkit-text-stroke:.12px #3a3a3a;">Freq. Asked Que.</div>
<svg class="a" style="left:696.200px;top:337.6px" width="12" height="12" viewBox="0 0 12 12" fill="none" stroke="#5a5a5a" stroke-width="1"><circle cx="6" cy="5.400" r="3.300"/><path d="M1.300 6V5a4.700 4.700 0 0 1 9.400 0v1"/><rect x="0.600" y="4.800" width="1.600" height="2.800" rx=".6" fill="#4d4d4d" stroke="none"/><rect x="9.800" y="4.800" width="1.600" height="2.800" rx=".6" fill="#4d4d4d" stroke="none"/><path d="M3.200 7.500c.5 2.200 1.600 3.600 2.800 3.600s2.300-1.400 2.800-3.600M10.600 7.600c0 1.600-1.500 2.500-3.400 2.600M3 4.600c1.500.3 3.500 0 4.500-1.200.4.700 1 1.100 1.600 1.200" stroke-width=".8"/></svg>
<div class="t" style="left:712.30px;top:339.66px;font-size:8px;color:#3a3a3a;transform:scaleX(0.9194);-webkit-text-stroke:.12px #3a3a3a;">Live Support</div>
<svg class="a" style="left:696.200px;top:359.3px" width="12" height="12" viewBox="0 0 12 12" fill="none" stroke="#5a5a5a" stroke-width="1"><path d="M3.800 10.800V5.600l2.600-4.400c1.300-.1 1.700.9 1.400 1.800l-.6 1.800h3.200c.8 0 1.200.8 1 1.500l-1.100 3.800c-.2.600-.6.900-1.200.9zM3.800 5.800H.9v5h2.900"/></svg>
<div class="t" style="left:712.30px;top:361.38px;font-size:8px;color:#3a3a3a;letter-spacing:-0.045px;transform:scaleX(0.9000);-webkit-text-stroke:.12px #3a3a3a;">Feedback</div>
<svg class="a" style="left:696.200px;top:381.0px" width="12" height="12" viewBox="0 0 12 12" fill="none" stroke="#5a5a5a" stroke-width="1"><path d="M6 .8l4.800 1.600c.1 4.400-1.400 7.400-4.800 8.900C2.600 9.800 1.100 6.800 1.200 2.400z"/><path d="M3.800 5.800l1.700 1.700 2.900-3.200" stroke-width=".9"/></svg>
<div class="t" style="left:712.30px;top:383.10px;font-size:8px;color:#3a3a3a;letter-spacing:-0.210px;transform:scaleX(0.9000);-webkit-text-stroke:.12px #3a3a3a;">License</div>
<svg class="a" style="left:696.700px;top:401.2px" width="14.400" height="14.400" viewBox="0 0 12 12" fill="none" stroke="#5a5a5a" stroke-width="1"><rect x="0.900" y="0.600" width="6.600" height="10.800" rx="1.100" stroke-width=".95"/><path d="M0.900 2.200h6.600M0.900 9.600h6.600M3.600 10.500h1.200" stroke-width=".7"/><path d="M8.500 4.700c.6.800.6 1.800 0 2.600M9.500 3.900c1 1.300 1 2.900 0 4.200" stroke-width=".7"/></svg>
<div class="t" style="left:711.50px;top:404.82px;font-size:8px;color:#3a3a3a;transform:scaleX(0.9327);-webkit-text-stroke:.12px #3a3a3a;">Mobile Devices</div>
<svg class="a" style="left:696.200px;top:424.4px" width="12" height="12" viewBox="0 0 12 12" fill="none" stroke="#5a5a5a" stroke-width="1"><circle cx="5" cy="3.800" r="2.700"/><path d="M0.700 11.200c.1-2.300 1.300-3.600 2.900-4.200.8.600 2 .6 2.800 0 1.600.6 2.800 1.900 2.900 4.200z"/><path d="M9.200 1.600c0-.6.400-1 1-1s1 .4 1 .9c0 .8-1 .8-1 1.700M10.200 4.200v.5" stroke-width=".8"/></svg>
<div class="t" style="left:712.30px;top:426.54px;font-size:8px;color:#3a3a3a;letter-spacing:-0.013px;transform:scaleX(0.9000);-webkit-text-stroke:.12px #3a3a3a;">Contact Us</div>
<div class="a" style="left:698px;top:113.8px;width:106.6px;height:1px;background:#c4c4c4;"></div>
<div class="a" style="left:698px;top:222.8px;width:106.6px;height:1px;background:#c4c4c4;"></div>
<div class="a" style="left:698px;top:288.1px;width:106.6px;height:1px;background:#c4c4c4;"></div>
<div class="a" style="left:698px;top:418.2px;width:106.6px;height:1px;background:#c4c4c4;"></div>
<div class="a" style="left:807.8px;top:49.6px;width:10.2px;height:390.1px;background:#f1f1f1;"></div>
<div class="a" style="left:809.5px;top:58.5px;width:6.5px;height:352.5px;background:#c8c8c8;"></div>
<svg class="a" style="left:808.500px;top:51.300px" width="7" height="5" viewBox="0 0 8 6"><path d="M1.200 4.400L4 1.500l2.800 2.900" fill="none" stroke="#333" stroke-width="1.200"/></svg>
<svg class="a" style="left:808.500px;top:433px" width="7" height="5" viewBox="0 0 8 6"><path d="M1.200 1.500L4 4.400l2.800-2.900" fill="none" stroke="#333" stroke-width="1.200"/></svg>
<div class="a" style="left:693.4px;top:439.7px;width:124.6px;height:33.8px;background:#fff;"></div>
<svg class="a" style="left:746px;top:448px" width="19" height="18" viewBox="0 0 19 18" fill="none"><path d="M8.400 1C2.300 3.500 -1.500 11 8.200 16.900 3.800 12 3.900 6 8.400 1z" fill="#1d7f88"/><path d="M17.600 1.900C11 -.4 2.500 7 11.700 16.500 7.600 10 10 3.700 17.600 1.900z" fill="#f2b21c"/><path d="M17.700 4.400C12 3.800 7 9 11.300 13.100c1.600 1.300 4.600 1.100 6.300.1-3.600.4-6.100-1.500-5.400-4.200.6-2.400 2.700-4 5.500-4.600z" fill="#27338c"/></svg>
<div class="a" style="left:257.400px;top:126.600px;width:302.900px;height:234.900px;background:#fff;border:1px solid #6dc0b9"></div>
<svg class="a" style="left:258.700px;top:161px" width="100" height="172" viewBox="258.700 161 100 172"><path d="M302.9 185.8H333L328.7 176.6L343.5 190.4L328.7 204.20000000000002L333 195.0H302.9z" fill="#000" fill-opacity="0.035"/><path d="M250 198.0H284.8L280.4 188.6L300.7 202.7L280.4 216.79999999999998L284.8 207.39999999999998H250z" fill="#000" fill-opacity="0.335"/><path d="M289.6 218.55H320.4L315.4 209.60000000000002L336 223.3L315.4 237.0L320.4 228.05H289.6z" fill="#000" fill-opacity="0.145"/><path d="M250 229.6H266L261.4 220.0L281.3 234.2L261.4 248.39999999999998L266 238.79999999999998H250z" fill="#000" fill-opacity="0.33"/><path d="M250 255.70000000000002H285.4L280.8 246.5L300.1 260.3L280.8 274.1L285.4 264.90000000000003H250z" fill="#000" fill-opacity="0.065"/><path d="M293.3 261.7H324L319.5 252.5L339.7 266.5L319.5 280.5L324 271.3H293.3z" fill="#000" fill-opacity="0.08"/><path d="M250 275.9H275L270.7 267.0L290 280.5L270.7 294.0L275 285.1H250z" fill="#000" fill-opacity="0.035"/><path d="M272.1 300.4H303.3L298.8 291.2L319.1 305.2L298.8 319.2L303.3 310.0H272.1z" fill="#000" fill-opacity="0.135"/></svg>
<div class="t" style="left:264.20px;top:137.60px;font-size:11.7px;color:#2d9f96;transform:scaleX(0.9895);">Auto Backup Schedule Task Wizard</div>
<div class="a" style="left:258.7px;top:160px;width:300.6px;height:1px;background:#cfcfcf;"></div>
<svg class="a" style="left:515.800px;top:137.800px" width="9.500" height="8.800" viewBox="0 0 11 10" fill="none" stroke="#222" stroke-width=".9"><rect x="0.700" y="0.700" width="6" height="5.600" rx=".6" fill="#fff"/><rect x="4" y="3.400" width="6.300" height="6" rx=".6" fill="#222"/><path d="M2 2.600h3.400M3.700 1.700v.9M2.300 4.900c1-.4 2-1.200 2.300-2.300" stroke-width=".7"/><path d="M5.700 8.600l1.400-3.600 1.400 3.600M6.200 7.600h1.800" stroke="#fff" stroke-width=".8"/></svg>
<svg class="a" style="left:541.700px;top:138.700px" width="7.500" height="7.300" viewBox="0 0 8 8"><path d="M0.400 0.400l7.200 7.200M7.600 0.400l-7.200 7.200" stroke="#222" stroke-width=".85"/></svg>
<div class="t" style="left:341.80px;top:169.20px;font-size:7.1px;color:#1d1d1d;transform:scaleX(0.9337);-webkit-text-stroke:.15px #1d1d1d;">Enter the name and password of a windows user.</div>
<div class="t" style="left:341.80px;top:182.30px;font-size:7.1px;color:#1d1d1d;letter-spacing:-0.024px;transform:scaleX(0.9000);-webkit-text-stroke:.15px #1d1d1d;">Enter the user name:</div>
<div class="t" style="left:341.80px;top:195.90px;font-size:7.1px;color:#1d1d1d;transform:scaleX(0.9193);-webkit-text-stroke:.15px #1d1d1d;">Enter the password:</div>
<div class="t" style="left:341.80px;top:209.70px;font-size:7.1px;color:#1d1d1d;transform:scaleX(0.9266);-webkit-text-stroke:.15px #1d1d1d;">Confirm password:</div>
<div class="a" style="left:432.400px;top:178.9px;width:88.200px;height:12.1px;border:1.200px solid #868686;background:#fff;"></div>
<div class="a" style="left:432.400px;top:192.6px;width:88.200px;height:12px;border:1.200px solid #868686;background:#fff;"></div>
<div class="a" style="left:432.400px;top:206.5px;width:88.200px;height:12.1px;border:1.200px solid #3c8fe0;background:#fff;box-shadow:0 0 0 .6px rgba(120,175,235,.6);"></div>
<div class="t" style="left:434.40px;top:182.60px;font-size:7.1px;color:#222;transform:scaleX(0.9167);">VMI715032\PH</div>
<div class="t" style="left:434.70px;top:196.60px;font-size:6.5px;color:#333;letter-spacing:-0.309px;transform:scaleX(0.9000);">*********</div>
<div class="t" style="left:434.70px;top:210.30px;font-size:6.5px;color:#333;letter-spacing:-0.544px;transform:scaleX(0.9000);">*********</div>
<div class="a" style="left:452.6px;top:208.8px;width:0.9px;height:7.6px;background:#111;"></div>
<div class="a" style="left:451.6px;top:209.3px;width:1px;height:0.8px;background:#111;"></div>
<div class="a" style="left:361.300px;top:228.500px;width:15.300px;height:14.200px;border:1px solid #ef2e1e;box-shadow:0 0 0 .3px #ef2e1e, inset 0 0 0 .25px #ef2e1e"></div>
<div class="t" style="left:366.30px;top:232.50px;font-size:8px;color:#ef2e1e;-webkit-text-stroke:.2px #ef2e1e;">8</div>
<div class="t" style="left:381.20px;top:227.20px;font-size:8.3px;color:#f4402b;transform:scaleX(0.9709);-webkit-text-stroke:.12px #f4402b;">enter your computer or pc&#x27;s</div>
<div class="t" style="left:385.40px;top:236.70px;font-size:8.3px;color:#f4402b;transform:scaleX(0.9669);-webkit-text-stroke:.12px #f4402b;">password to authenticate</div>
<div class="t" style="left:408.00px;top:246.40px;font-size:8.3px;color:#f4402b;transform:scaleX(0.9590);-webkit-text-stroke:.12px #f4402b;">auto-backup</div>
<div class="t" style="left:413.50px;top:265.60px;font-size:8.3px;color:#f4402b;transform:scaleX(0.9700);-webkit-text-stroke:.12px #f4402b;">click next</div>
<div class="t" style="left:341.80px;top:296.80px;font-size:7.1px;color:#1d1d1d;transform:scaleX(0.9380);-webkit-text-stroke:.15px #1d1d1d;">If a password is not entered, scheduled tasks might not run.</div>
<div class="a" style="left:258.7px;top:333.3px;width:300.6px;height:1px;background:#cfcfcf;"></div>
<div class="a" style="left:416.2px;top:340.600px;width:43.8px;height:16.200px;background:#fff;border:1px solid #5a5a5a"></div>
<div class="t" style="left:431.00px;top:345.40px;font-size:7.3px;color:#222;letter-spacing:-0.558px;transform:scaleX(0.9000);font-weight:bold;">Back</div>
<div class="a" style="left:463.9px;top:340.600px;width:44px;height:16.200px;background:#fff;border:1px solid #5a5a5a"></div>
<div class="t" style="left:478.40px;top:345.40px;font-size:7.3px;color:#222;letter-spacing:-0.040px;transform:scaleX(0.9000);font-weight:bold;">Next</div>
<div class="a" style="left:511.7px;top:340.600px;width:44px;height:16.200px;background:#fff;border:1px solid #5a5a5a"></div>
<div class="t" style="left:523.80px;top:345.40px;font-size:7.3px;color:#222;letter-spacing:-0.397px;transform:scaleX(0.9000);font-weight:bold;">Cancel</div>
<div class="a" style="left:103px;top:473.5px;width:715px;height:14.3px;background:#e8ebed;"></div>
<div class="t" style="left:106.50px;top:477.40px;font-size:7.4px;color:#8e9499;letter-spacing:-0.169px;transform:scaleX(0.9000);">System Date:</div>
<div class="t" style="left:152.40px;top:477.40px;font-size:7.4px;color:#222;letter-spacing:-0.073px;transform:scaleX(0.9000);-webkit-text-stroke:.25px #222;">15/07/2025 Tuesday</div>
<div class="t" style="left:218.80px;top:477.40px;font-size:7.4px;color:#8e9499;letter-spacing:-0.064px;transform:scaleX(0.9000);">Software Date:</div>
<div class="t" style="left:269.20px;top:477.40px;font-size:7.4px;color:#3a3a3a;letter-spacing:-0.067px;transform:scaleX(0.9000);">22/05/2025 Thursday</div>
<div class="a" style="left:336.5px;top:474px;width:72px;height:13px;overflow:hidden">
<div class="t" style="left:-3.60px;top:3.40px;font-size:7.4px;color:#222;letter-spacing:-0.332px;transform:scaleX(0.9000);-webkit-text-stroke:.25px #222;">GARDEN AREA (VOLTA) &amp;</div>
</div>
<svg class="a" style="left:410px;top:479.800px" width="4" height="2.400" viewBox="0 0 5 3"><path d="M0.200 0.200h4.600L2.500 2.800z" fill="#222"/></svg>
<svg class="a" style="left:762.500px;top:475.200px" width="11" height="11.500" viewBox="0 0 12 12" fill="none" stroke="#555" stroke-width="1"><circle cx="6" cy="5.400" r="3.300"/><path d="M1.300 6V5a4.700 4.700 0 0 1 9.400 0v1"/><rect x="0.600" y="4.800" width="1.600" height="2.800" rx=".6" fill="#4d4d4d" stroke="none"/><rect x="9.800" y="4.800" width="1.600" height="2.800" rx=".6" fill="#4d4d4d" stroke="none"/><path d="M3.200 7.500c.5 2.200 1.600 3.600 2.800 3.600s2.300-1.400 2.800-3.600M10.600 7.600c0 1.600-1.500 2.500-3.400 2.600M3 4.600c1.500.3 3.500 0 4.500-1.200.4.700 1 1.100 1.600 1.200" stroke-width=".8"/></svg>
<div class="t" style="left:777.60px;top:477.20px;font-size:7.5px;color:#a5462c;letter-spacing:-0.075px;transform:scaleX(0.9000);">Live Support</div>
<div class="a" style="left:0px;top:487.4px;width:818px;height:1.6px;background:#1f9b92;"></div>
<div class="a" style="left:816px;top:49.6px;width:2px;height:440px;background:#1f9b92;"></div>
</div>
</body></html>
